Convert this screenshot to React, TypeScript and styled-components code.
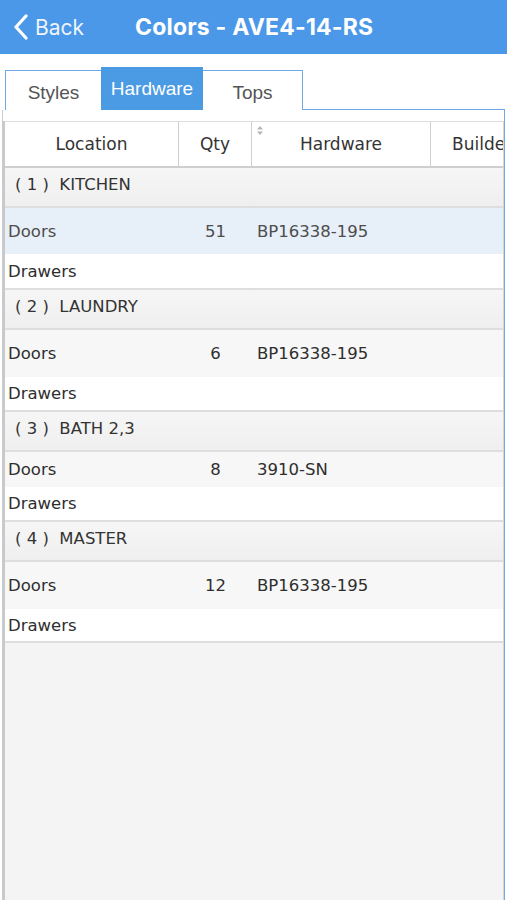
import React from 'react';
import styled, { createGlobalStyle } from 'styled-components';

const GlobalStyle = createGlobalStyle`
  html, body {
    margin: 0;
    padding: 0;
    background: #ffffff;
  }
  body {
    width: 507px;
    height: 900px;
    overflow: hidden;
  }
`;

const Screen = styled.div`
  width: 507px;
  height: 900px;
  display: flex;
  flex-direction: column;
  background: #ffffff;
  overflow: hidden;
`;

const NavBar = styled.div`
  height: 54px;
  flex-shrink: 0;
  background: #4b98e9;
  display: flex;
  align-items: center;
  color: #ffffff;
  font-family: Inter, 'Liberation Sans', sans-serif;
`;

const BackButton = styled.div`
  display: flex;
  align-items: center;
  gap: 6px;
  padding-left: 13px;
  width: 122px;
  font-size: 21px;
  font-weight: 400;
  color: rgba(255, 255, 255, 0.92);
`;

const Title = styled.h1`
  margin: 0;
  font-size: 23px;
  font-weight: 700;
  letter-spacing: 0.2px;
  white-space: nowrap;
`;

const TabNav = styled.div`
  display: flex;
  margin: 16px 2px 0 2px;
  padding-left: 3px;
  font-family: 'Liberation Sans', Arial, sans-serif;
`;

const TabGroup = styled.div`
  display: flex;
  height: 39px;
  border: 1px solid #70a9e6;
  border-bottom: none;
`;

const Tab = styled.div<{ $active?: boolean; $width: number }>`
  width: ${p => p.$width}px;
  display: flex;
  align-items: center;
  justify-content: center;
  font-size: 19px;
  color: ${p => (p.$active ? '#ffffff' : '#555555')};
  background: ${p => (p.$active ? '#4a9ae4' : 'transparent')};
  margin-top: ${p => (p.$active ? '-4px' : '0')};
  padding-top: ${p => (p.$active ? '0' : '4px')};
`;

const TabFiller = styled.div`
  flex: 1;
  border-bottom: 1px solid #70a9e6;
`;

const Panel = styled.div`
  flex: 1;
  margin: 0 2px;
  padding-top: 11px;
  border-left: 1px solid #c4ccd6;
  border-right: 1px solid #70a9e6;
  display: flex;
  flex-direction: column;
  overflow: hidden;
`;

const Grid = styled.div`
  flex: 1;
  display: flex;
  flex-direction: column;
  width: 100%;
  border-left: 2px solid #c9c9c9;
  border-right: 1px solid #d6d6d6;
  box-sizing: border-box;
  background: #f4f4f4;
  overflow: hidden;
  font-family: 'DejaVu Sans', Verdana, sans-serif;
`;

const HeaderRow = styled.div`
  display: grid;
  grid-template-columns: 174px 73px 179px 180px;
  height: 44px;
  background: #ffffff;
  border-top: 1px solid #dcdcdc;
  border-bottom: 2px solid #cfcfcf;
  flex-shrink: 0;
`;

const HeaderCell = styled.div<{ $last?: boolean }>`
  position: relative;
  display: flex;
  align-items: center;
  justify-content: center;
  font-size: 17px;
  color: #333333;
  border-right: ${p => (p.$last ? 'none' : '1px solid #cfcfcf')};
  white-space: nowrap;
`;

const BuilderHead = styled(HeaderCell)`
  justify-content: flex-start;
  padding-left: 21px;
`;

const SortMark = styled.svg`
  position: absolute;
  left: 5px;
  top: 4px;
`;

const GroupRow = styled.div`
  height: 40px;
  display: flex;
  align-items: center;
  padding-left: 10px;
  padding-bottom: 5px;
  box-sizing: border-box;
  background: linear-gradient(#f6f6f6, #efefef);
  border-bottom: 2px solid #dedede;
  font-size: 16.5px;
  color: #333333;
  white-space: pre;
  flex-shrink: 0;
`;

const ItemRow = styled.div<{ $height: number; $tone: 'selected' | 'shaded' | 'plain'; $divider?: boolean }>`
  display: grid;
  grid-template-columns: 174px 73px 179px 1fr;
  height: ${p => p.$height}px;
  box-sizing: border-box;
  align-items: center;
  font-size: 16.5px;
  color: ${p => (p.$tone === 'selected' ? '#4d4d4d' : '#2e2e2e')};
  background: ${p =>
    p.$tone === 'selected' ? '#e7eff9' : p.$tone === 'shaded' ? '#f7f7f7' : '#ffffff'};
  border-bottom: ${p => (p.$divider ? '2px solid #dedede' : 'none')};
  flex-shrink: 0;
`;

const NameCell = styled.div`
  padding-left: 3px;
`;

const QtyCell = styled.div`
  text-align: center;
`;

const CodeCell = styled.div`
  padding-left: 5px;
`;

type Item = { name: string; qty?: number; code?: string; height: number };
type Group = { index: number; title: string; selected?: boolean; items: Item[] };

const groups: Group[] = [
  {
    index: 1,
    title: 'KITCHEN',
    selected: true,
    items: [
      { name: 'Doors', qty: 51, code: 'BP16338-195', height: 46 },
      { name: 'Drawers', height: 36 },
    ],
  },
  {
    index: 2,
    title: 'LAUNDRY',
    items: [
      { name: 'Doors', qty: 6, code: 'BP16338-195', height: 47 },
      { name: 'Drawers', height: 35 },
    ],
  },
  {
    index: 3,
    title: 'BATH 2,3',
    items: [
      { name: 'Doors', qty: 8, code: '3910-SN', height: 35 },
      { name: 'Drawers', height: 35 },
    ],
  },
  {
    index: 4,
    title: 'MASTER',
    items: [
      { name: 'Doors', qty: 12, code: 'BP16338-195', height: 47 },
      { name: 'Drawers', height: 34 },
    ],
  },
];

const ChevronLeft = () => (
  <svg width="16" height="26" viewBox="0 0 16 26">
    <path d="M13 2 L3 13 L13 24" fill="none" stroke="#ffffff" strokeWidth="3.2" strokeLinecap="round" strokeLinejoin="round" />
  </svg>
);

export default function App() {
  return (
    <>
      <GlobalStyle />
      <Screen>
        <NavBar>
          <BackButton>
            <ChevronLeft />
            Back
          </BackButton>
          <Title>Colors - AVE4-14-RS</Title>
        </NavBar>

        <TabNav>
          <TabGroup>
            <Tab $width={95}>Styles</Tab>
            <Tab $width={102} $active>Hardware</Tab>
            <Tab $width={99}>Tops</Tab>
          </TabGroup>
          <TabFiller />
        </TabNav>

        <Panel>
          <Grid>
            <HeaderRow>
              <HeaderCell>Location</HeaderCell>
              <HeaderCell>Qty</HeaderCell>
              <HeaderCell>
                <SortMark width="6" height="9" viewBox="0 0 6 9">
                  <path d="M3 0 L6 3.5 L0 3.5 Z M3 9 L6 5.5 L0 5.5 Z" fill="#b5b5b5" />
                </SortMark>
                Hardware
              </HeaderCell>
              <BuilderHead $last>Builder</BuilderHead>
            </HeaderRow>

            {groups.map(g => (
              <React.Fragment key={g.index}>
                <GroupRow>{`( ${g.index} )  ${g.title}`}</GroupRow>
                {g.items.map((it, i) => (
                  <ItemRow
                    key={it.name}
                    $height={it.height}
                    $tone={i === 0 ? (g.selected ? 'selected' : 'shaded') : 'plain'}
                    $divider={i === g.items.length - 1}
                  >
                    <NameCell>{it.name}</NameCell>
                    <QtyCell>{it.qty ?? ''}</QtyCell>
                    <CodeCell>{it.code ?? ''}</CodeCell>
                    <div />
                  </ItemRow>
                ))}
              </React.Fragment>
            ))}
          </Grid>
        </Panel>
      </Screen>
    </>
  );
}
